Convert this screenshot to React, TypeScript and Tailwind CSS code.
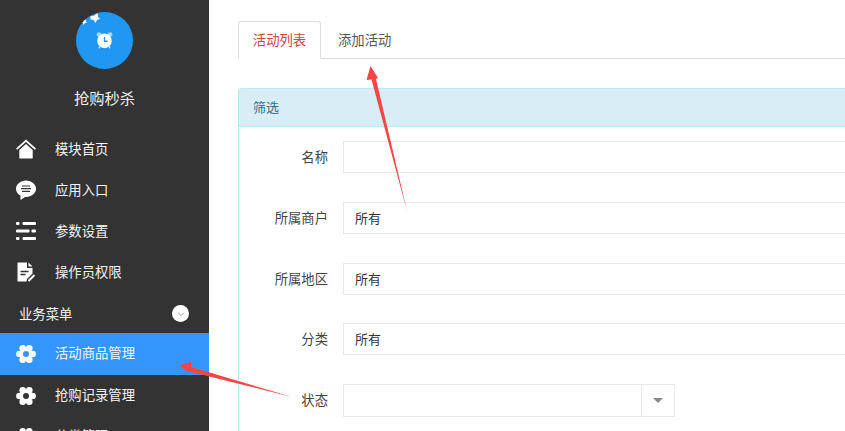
import React from "react";

const lobes = [0, 60, 120, 180, 240, 300].map((a) => ({
  x: 10 + 6.6 * Math.cos((a * Math.PI) / 180),
  y: 10 + 6.6 * Math.sin((a * Math.PI) / 180),
}));

const Gear = ({ hole }: { hole: string }) => (
  <svg viewBox="0 0 20 20" className="w-5 h-5" fill="#fff">
    {lobes.map((l, i) => (
      <circle key={i} cx={l.x} cy={l.y} r="3.300" />
    ))}
    <circle cx="10" cy="10" r="6.500" />
    <circle cx="10" cy="10" r="3" fill={hole} />
  </svg>
);

const Home = () => (
  <svg viewBox="0 0 20 20" className="w-5 h-5" fill="#fff">
    <path d="M10 .5 0 9.500l1.200 1.300L10 3l8.800 7.800L20 9.500z" />
    <path d="M10 5 3.300 11v8c0 .3.200.5.500.5h12.400c.3 0 .5-.2.500-.5v-8z" />
  </svg>
);

const Chat = () => (
  <svg viewBox="0 0 20 20" className="w-5 h-5">
    <path fill="#fff" d="M10 .5c5.500 0 10 3.700 10 8.200s-4.500 8.200-10 8.200h-1L4.500 20v-4.200C1.800 14.300 0 11.700 0 8.700 0 4.200 4.500.5 10 .5z" />
    <path stroke="#333" strokeWidth="1.200" d="M6 6h8M5 8.700h10M6 11.400h8" />
  </svg>
);

const Lines = () => (
  <svg viewBox="0 0 20 20" className="w-5 h-5" fill="#fff">
    <rect x="0" y="1" width="3.500" height="3" rx="1" />
    <rect x="6.500" y="1" width="13.500" height="3" rx="1" />
    <rect x="0" y="8.500" width="13.500" height="3" rx="1" />
    <rect x="15.500" y="8.500" width="4.500" height="3" rx="1" />
    <rect x="0" y="16" width="3.500" height="3" rx="1" />
    <rect x="6.500" y="16" width="13.500" height="3" rx="1" />
  </svg>
);

const Doc = () => (
  <svg viewBox="0 0 20 20" className="w-5 h-5">
    <path fill="#fff" d="M1.500 1.500c0-.6.400-1 1-1H11v5.500h5.500v5.500L11 17l-.5 2.500H2.500c-.6 0-1-.4-1-1z" />
    <path fill="#fff" d="M12.500.5l4 4h-4z" />
    <path stroke="#333" strokeWidth="1.300" d="M4.500 9.500h8M4.500 12.500h5" />
    <path stroke="#fff" strokeWidth="2" d="M12.500 19l6-6" />
  </svg>
);

const items = [
  { icon: <Home />, label: "模块首页" },
  { icon: <Chat />, label: "应用入口" },
  { icon: <Lines />, label: "参数设置" },
  { icon: <Doc />, label: "操作员权限" },
];

const lower = [
  { label: "活动商品管理", active: true },
  { label: "抢购记录管理", active: false },
  { label: "分类管理", active: false },
];

function NavItem({ icon, label, active, raised }: { icon: React.ReactNode; label: string; active?: boolean; raised?: boolean }) {
  return (
    <div className={`shrink-0 flex items-center pl-4 text-[13.33px] text-[#f4f4f4] ${active ? "h-[42px] bg-[#3396fd]" : "h-[41px]"}`}>
      <span className="w-5 h-5 flex items-center justify-center">{icon}</span>
      <span className={`ml-[19px] ${raised ? "mb-[2px]" : ""}`}>{label}</span>
    </div>
  );
}

function Field({ label, value, className }: { label: string; value?: string; className: string }) {
  return (
    <div className={`flex items-center ${className}`}>
      <label className="w-[104px] pr-[15px] text-right text-[13.33px] text-[#444] shrink-0">{label}</label>
      <div className="flex-1 h-[32px] border border-[#e9e9e9] pl-[11px] flex items-center text-[13px] text-[#333] bg-white">{value}</div>
    </div>
  );
}

export default function App() {
  return (
    <div
      className="relative w-[845px] h-[431px] overflow-hidden flex bg-white"
      style={{ fontFamily: '"Noto Sans CJK SC", "Liberation Sans", sans-serif' }}
    >
      <aside className="w-[209px] h-full shrink-0 bg-[#333333] flex flex-col overflow-hidden">
        <div className="flex flex-col items-center pt-[12px] shrink-0">
          <div className="relative w-[57px] h-[57px] rounded-full bg-[#2098f3] overflow-hidden flex items-center justify-center">
            <svg viewBox="0 0 24 24" className="w-[19px] h-[19px]" fill="#fff">
              <circle cx="5" cy="4.500" r="3" fill="#a9d6fa" />
              <circle cx="19" cy="4.500" r="3" fill="#a9d6fa" />
              <path d="M5 22l2-3.500M19 22l-2-3.500" stroke="#d5ebfc" strokeWidth="1.500" />
              <circle cx="12" cy="12.500" r="9.200" />
              <path d="M12 7.500v5.500h4" stroke="#2098f3" strokeWidth="1.700" fill="none" />
            </svg>
            <svg viewBox="0 0 57 57" className="absolute left-0 top-0 w-[57px] h-[57px]" fill="#fff">
              <path d="M14.500 3.500l3 .5 4-3 .5 4 2 2-3 1-1.500 3-2-3-3-.5z" />
              <path d="M5.500 9.500l2-.5 2-2 .5 2.500 1 1-2 .5-1.500 2-.5-2z" />
            </svg>
          </div>
          <div className="mt-[18px] text-[15.300px] leading-5 text-[#f0f0f0]">抢购秒杀</div>
        </div>
        <div className="mt-[21px] flex flex-col shrink-0">
          {items.map((i) => (
            <NavItem key={i.label} icon={i.icon} label={i.label} />
          ))}
        </div>
        <div className="h-[41px] pt-[2px] shrink-0 flex items-center justify-between pl-[19px] pr-[20px] text-[13.33px] text-[#f4f4f4]">
          <span>业务菜单</span>
          <span className="w-[17px] h-[17px] rounded-full bg-white flex items-center justify-center">
            <svg viewBox="0 0 10 10" className="w-2 h-2" fill="none" stroke="#888" strokeWidth="1">
              <path d="M1.500 3.500 5 7l3.500-3.500" />
            </svg>
          </span>
        </div>
        {lower.map((l) => (
          <NavItem key={l.label} icon={<Gear hole={l.active ? "#3396fd" : "#333333"} />} label={l.label} active={l.active} raised />
        ))}
      </aside>

      <main className="flex-1 min-w-0 pl-[29px] pt-[21px]">
        <div className="h-[38px] border-b border-[#ddd] flex">
          <div className="w-[83px] h-[38px] border border-[#ddd] border-b-white rounded-t-[3px] bg-white flex items-center justify-center text-[13.33px] text-[#cf4545]">
            活动列表
          </div>
          <div className="ml-[17px] h-[37px] flex items-center text-[13.33px] text-[#555]">添加活动</div>
        </div>
        <section className="mt-[29px] w-[640px] h-[400px] border border-[#bce8f1] rounded-t-[3px]">
          <div className="h-[38px] pb-[2px] bg-[#d9edf7] border-b border-[#bce8f1] pl-[14px] flex items-center text-[13px] text-[#31708f]">筛选</div>
          <div className="pt-[14px]">
            <Field label="名称" className="mb-[29px]" />
            <Field label="所属商户" value="所有" className="mb-[29px]" />
            <Field label="所属地区" value="所有" className="mb-[28px]" />
            <Field label="分类" value="所有" className="mb-[29px]" />
            <div className="flex items-center">
              <label className="w-[104px] pr-[15px] mb-[2px] text-right text-[13.33px] text-[#444] shrink-0">状态</label>
              <div className="h-[33px] w-[332px] border border-[#e9e9e9] flex justify-end">
                <div className="w-[33px] border-l border-[#e9e9e9] flex items-center justify-center">
                  <span className="w-0 h-0 border-x-[5px] border-x-transparent border-t-[5px] border-t-[#888]" />
                </div>
              </div>
            </div>
          </div>
        </section>
      </main>

      <svg className="absolute left-0 top-0 w-[845px] h-[431px] pointer-events-none" viewBox="0 0 845 431">
        <path d="M407 211 L376 79 L378 78 L370.500 66 L366.500 80 L371.500 79.500 Z" fill="#f54545" />
        <path d="M292 397 L191 367 L191 362 L179 365.500 L190 373 L189 371.500 Z" fill="#f54545" />
      </svg>
    </div>
  );
}
